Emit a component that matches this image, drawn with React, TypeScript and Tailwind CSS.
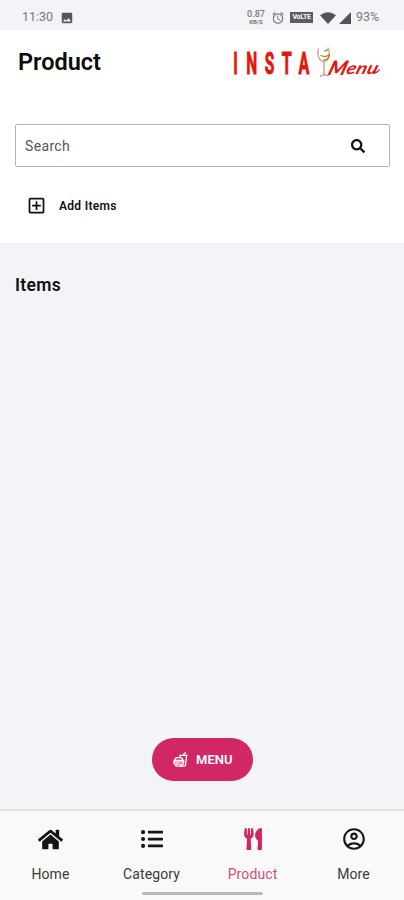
import type { ReactNode } from "react";
import { FaHome, FaListUl, FaSearch, FaUtensils } from "react-icons/fa";
import { IoFastFoodOutline } from "react-icons/io5";
import {
  MdImage,
  MdOutlineAccountCircle,
  MdOutlineAddBox,
  MdOutlineAlarm,
} from "react-icons/md";

type NavItemProps = {
  label: string;
  icon: ReactNode;
  active?: boolean;
};

const StatusBar = () => {
  return (
    <div className="flex h-[30px] shrink-0 items-center bg-[#f2f4f8] pt-[5px] pl-[22px] pr-[23px] text-[#77797d]">
      <span className="w-[31px] text-[12.5px]">11:30</span>
      <MdImage className="ml-[7px] size-[14px] text-[#55575b]" />
      <div className="ml-auto flex items-center">
        <div className="flex w-[18px] flex-col items-center font-medium leading-none">
          <span className="text-[9px]">0.87</span>
          <span className="text-[6px] font-bold">KB/S</span>
        </div>
        <MdOutlineAlarm className="ml-[6px] size-[14px]" />
        <span className="ml-[5px] flex h-[11px] w-[23px] items-center justify-center bg-[#5b5d61] text-[7px] font-bold tracking-[-0.3px] text-white">
          VoLTE
        </span>
        <svg className="ml-[7px] h-3 w-4" viewBox="0 0 16 12">
          <path d="M0 3.2Q8-2.6 16 3.2L8 12Z" fill="#515357" />
        </svg>
        <svg className="ml-[3px] size-3" viewBox="0 0 12 12">
          <path d="M12 0V12H0Z" fill="#515357" />
        </svg>
        <span className="ml-[5px] w-[25px] text-[12.5px]">93%</span>
      </div>
    </div>
  );
};

const Logo = () => {
  return (
    <svg className="h-[36px] w-[156px] overflow-visible" viewBox="0 0 156 36">
      <g
        fill="#e81408"
        stroke="#e81408"
        strokeWidth=".9"
        fontFamily="Roboto, sans-serif"
        fontSize="31"
        fontWeight="700"
        textAnchor="middle"
      >
        <text transform="translate(4.6 27.5) scale(.5 1)">I</text>
        <text transform="translate(20.6 27.5) scale(.5 1)">N</text>
        <text transform="translate(38.6 27.5) scale(.5 1)">S</text>
        <text transform="translate(55.8 27.5) scale(.52 1)">T</text>
        <text transform="translate(73 27.5) scale(.52 1)">A</text>
      </g>
      <g fill="none" strokeLinecap="round">
        <path
          d="M87.5 3C85.5 9 88 14.5 92.5 15.5C97.5 15.5 100 9 97 2"
          stroke="#c9a58a"
          strokeWidth="1.3"
        />
        <path d="M93 16V29" stroke="#d9a088" strokeWidth="1.5" />
        <path d="M89.5 30.5Q93 27.5 97 30" stroke="#dc8e7c" strokeWidth="1.2" />
        <path
          d="M90 9.5Q94 12 98.5 8.5M93 14Q97 14 98.5 9M94 5L96.5 4"
          stroke="#b58a32"
          strokeWidth="1.4"
        />
      </g>
      <g
        fill="#e0190f"
        fontFamily="Lato, sans-serif"
        fontStyle="italic"
        transform="translate(96 28.5) skewX(-18)"
      >
        <text
          fontSize="20"
          fontWeight="900"
          textLength="18"
          lengthAdjust="spacingAndGlyphs"
        >
          M
        </text>
        <text
          x="18"
          y="-1"
          fontSize="17"
          fontWeight="700"
          textLength="31"
          lengthAdjust="spacingAndGlyphs"
        >
          enu
        </text>
        <path d="M47-2Q49-1 51-5" fill="none" stroke="#e0190f" strokeWidth="1.5" />
      </g>
    </svg>
  );
};

const NavItem = ({ label, icon, active }: NavItemProps) => {
  return (
    <button
      className={`flex flex-1 flex-col items-center pt-4 ${
        active ? "text-[#d52465]" : "text-[#161616]"
      }`}
    >
      <span className="flex h-6 items-center justify-center">{icon}</span>
      <span
        className={`mt-[12.5px] text-[14px] leading-5 tracking-[0.1px] ${
          active ? "text-[#cf4d7b]" : "text-[#3b3b3b]"
        }`}
      >
        {label}
      </span>
    </button>
  );
};

const App = () => {
  return (
    <div className="flex h-[900px] w-full flex-col overflow-hidden bg-[#f2f4f8] font-[Roboto,sans-serif]">
      <StatusBar />
      <div className="h-[213px] shrink-0 bg-white">
        <header className="flex items-start justify-between pt-[16px] pl-[18px] pr-[17px]">
          <h1 className="text-[23.5px] leading-8 font-semibold text-[#0b0b0b]">
            Product
          </h1>
          <Logo />
        </header>
        <div className="mr-[14px] ml-[15px] mt-[42px] flex h-[43px] items-center justify-between rounded-[2px] border border-[#b5b5b5] pt-px pl-[9px] pr-[24px]">
          <span className="text-[14px] tracking-[0.35px] text-[#555]">
            Search
          </span>
          <FaSearch className="size-[14px] text-[#111]" />
        </div>
        <button className="mt-[28px] ml-[26px] flex items-center text-[#111]">
          <MdOutlineAddBox className="size-[21px]" />
          <span className="ml-3 text-[12px] font-semibold tracking-[0.3px]">
            Add Items
          </span>
        </button>
      </div>
      <main className="flex flex-1 flex-col justify-between pb-[28px]">
        <h2 className="mt-[30px] ml-[15px] text-[17.5px] leading-6 font-semibold tracking-[0.3px] text-[#111]">
          Items
        </h2>
        <button className="ml-[152px] flex h-[43px] w-[101px] items-center rounded-full bg-[#d22765] pl-[21px] text-white">
          <IoFastFoodOutline className="size-[15px] [&_*]:[stroke-width:44px]" />
          <span className="ml-[8px] text-[13px] font-semibold">MENU</span>
        </button>
      </main>
      <nav className="relative flex h-[91px] shrink-0 border-t-2 border-[#e3e5e8] bg-[#f9f9f9]">
        <NavItem label="Home" icon={<FaHome className="size-[25px]" />} />
        <NavItem label="Category" icon={<FaListUl className="size-[22px]" />} />
        <NavItem
          label="Product"
          icon={<FaUtensils className="h-[22px] w-[20px]" />}
          active
        />
        <NavItem
          label="More"
          icon={<MdOutlineAccountCircle className="size-[26px]" />}
        />
        <div className="absolute bottom-[5px] left-[142px] h-[3px] w-[121px] rounded-full bg-[#b9b9b9]" />
      </nav>
    </div>
  );
};

export default App;
